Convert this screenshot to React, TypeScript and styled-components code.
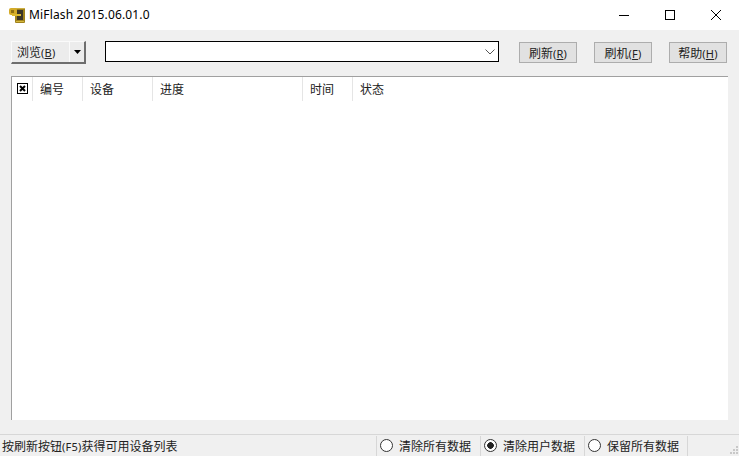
import React from "react";
import styled, { createGlobalStyle } from "styled-components";

const GlobalStyle = createGlobalStyle`
  html, body {
    margin: 0;
    padding: 0;
    background: #f0f0f0;
  }
  body {
    font-family: "Noto Sans", "Noto Sans CJK SC", sans-serif;
    font-size: 12px;
    color: #000;
  }
`;

const columns = [
  { label: "编号", width: 50 },
  { label: "设备", width: 70 },
  { label: "进度", width: 150 },
  { label: "时间", width: 50 },
  { label: "状态", width: 60 },
];

const modes = [
  { label: "清除所有数据", checked: false },
  { label: "清除用户数据", checked: true },
  { label: "保留所有数据", checked: false },
];

function AppIcon() {
  return (
    <svg width="16" height="16" viewBox="0 0 16 16">
      {/* phone body */}
      <rect x="6" y="1" width="10" height="15" rx="1" fill="#a0821c" />
      <rect x="6" y="1" width="10" height="1" fill="#cdb044" />
      <rect x="8" y="3" width="6" height="10" fill="#3a3528" />
      <rect x="7" y="14" width="8" height="1" fill="#d6b93f" />
      {/* key */}
      <rect x="0" y="1" width="8" height="7" rx="2" fill="#d4ab28" />
      <rect x="2" y="3" width="3" height="3" fill="#8f7012" />
      <rect x="3" y="7" width="9" height="2" fill="#dcb92f" />
    </svg>
  );
}

export default function App() {
  return (
    <Window>
      <GlobalStyle />
      <TitleBar>
        <TitleIcon>
          <AppIcon />
        </TitleIcon>
        <Title>MiFlash 2015.06.01.0</Title>
        <WindowButton>
          <svg width="10" height="10" viewBox="0 0 10 10">
            <path d="M0 5.5H10" stroke="#000" fill="none" />
          </svg>
        </WindowButton>
        <WindowButton>
          <svg width="10" height="10" viewBox="0 0 10 10">
            <rect x="0.5" y="0.5" width="9" height="9" stroke="#000" fill="none" />
          </svg>
        </WindowButton>
        <WindowButton>
          <svg width="10" height="10" viewBox="0 0 10 10">
            <path d="M0 0L10 10M10 0L0 10" stroke="#000" fill="none" />
          </svg>
        </WindowButton>
      </TitleBar>

      <Toolbar>
        <BrowseGroup>
          <BrowseButton>
            浏览<Hotkey>(<u>B</u>)</Hotkey>
          </BrowseButton>
          <BrowseArrow>
            <svg width="7" height="4" viewBox="0 0 7 4">
              <path d="M0 0H7L3.5 4Z" fill="#000" />
            </svg>
          </BrowseArrow>
        </BrowseGroup>
        <Combo>
          <svg width="10" height="6" viewBox="0 0 10 6">
            <path d="M0.5 0.5L5 5L9.5 0.5" stroke="#555" fill="none" />
          </svg>
        </Combo>
        <ActionButton>
          刷新<Hotkey>(<u>R</u>)</Hotkey>
        </ActionButton>
        <ActionButton>
          刷机<Hotkey>(<u>F</u>)</Hotkey>
        </ActionButton>
        <ActionButton>
          帮助<Hotkey>(<u>H</u>)</Hotkey>
        </ActionButton>
      </Toolbar>

      <DeviceList>
        <HeaderRow>
          <CheckCell>
            <CheckMark>
              <svg width="11" height="11" viewBox="0 0 11 11">
                <rect x="0.5" y="0.5" width="10" height="10" fill="#fff" stroke="#000" />
                <path d="M3 3L8 8M8 3L3 8" stroke="#000" strokeWidth="2" />
              </svg>
            </CheckMark>
          </CheckCell>
          {columns.map(col => (
            <HeaderCell key={col.label} $width={col.width}>
              {col.label}
            </HeaderCell>
          ))}
        </HeaderRow>
      </DeviceList>

      <StatusBar>
        <StatusText>
          按刷新按钮<Hotkey>(F5)</Hotkey>获得可用设备列表
        </StatusText>
        {modes.map(mode => (
          <ModeItem key={mode.label}>
            <Radio $checked={mode.checked} />
            {mode.label}
          </ModeItem>
        ))}
        <Grip>
          <svg width="12" height="12" viewBox="0 0 12 12">
            <path d="M9 2h2v2H9zM6 5h2v2H6zM9 5h2v2H9zM3 8h2v2H3zM6 8h2v2H6zM9 8h2v2H9z" fill="#c8c8c8" />
          </svg>
        </Grip>
      </StatusBar>
    </Window>
  );
}

const Window = styled.div`
  width: 739px;
  height: 456px;
  display: flex;
  flex-direction: column;
  overflow: hidden;
  background: #f0f0f0;
`;

const TitleBar = styled.div`
  height: 30px;
  display: flex;
  align-items: center;
  background: #fff;
  flex: none;
`;

const TitleIcon = styled.div`
  width: 16px;
  height: 16px;
  margin-left: 9px;
  margin-right: 4px;
`;

const Title = styled.div`
  flex: 1;
  font-size: 12px;
  letter-spacing: 0.15px;
  line-height: 30px;
  color: #000;
`;

const WindowButton = styled.div`
  width: 46px;
  height: 30px;
  display: flex;
  align-items: center;
  justify-content: center;
`;

const Toolbar = styled.div`
  height: 46px;
  flex: none;
  display: flex;
  align-items: flex-start;
  padding: 11px 12px 0 11px;
  box-sizing: border-box;
`;

const BrowseGroup = styled.div`
  width: 75px;
  height: 23px;
  display: flex;
  box-sizing: border-box;
  background: #ececec;
  border-top: 1px solid #fafafa;
  border-left: 1px solid #fafafa;
  border-right: 2px solid #6e6e6e;
  border-bottom: 2px solid #6e6e6e;
`;

const BrowseButton = styled.div`
  width: 58px;
  font-size: 12px;
  line-height: 21px;
  padding-left: 5px;
  box-sizing: border-box;
  color: #222;
  border-right: 1px solid #fafafa;
`;

const BrowseArrow = styled.div`
  flex: 1;
  display: flex;
  align-items: center;
  justify-content: center;
`;

const Combo = styled.div`
  width: 394px;
  height: 21px;
  margin-left: 19px;
  margin-right: 20px;
  box-sizing: border-box;
  border: 1px solid #000;
  background: #fff;
  display: flex;
  align-items: center;
  justify-content: flex-end;
  padding-right: 3px;
`;

const ActionButton = styled.div`
  width: 58px;
  height: 21px;
  margin-top: 1px;
  margin-right: 17px;
  box-sizing: border-box;
  background: #e1e1e1;
  border: 1px solid #adadad;
  font-size: 12px;
  line-height: 21px;
  text-align: center;
  color: #222;
  &:last-child {
    margin-right: 0;
  }
`;

const Hotkey = styled.span`
  font-size: 11px;
  letter-spacing: 0.2px;
`;

const DeviceList = styled.div`
  width: 717px;
  height: 344px;
  margin-left: 11px;
  flex: none;
  box-sizing: border-box;
  background: #fff;
  border-top: 1px solid #a0a0a0;
  border-left: 1px solid #a0a0a0;
`;

const HeaderRow = styled.div`
  display: flex;
  height: 24px;
`;

const CheckCell = styled.div`
  width: 21px;
  height: 24px;
  display: flex;
  align-items: center;
  justify-content: center;
  box-sizing: border-box;
  border-right: 1px solid #e5e5e5;
`;

const CheckMark = styled.div`
  width: 11px;
  height: 11px;
  margin-top: -5px;
`;

const HeaderCell = styled.div<{ $width: number }>`
  width: ${p => p.$width}px;
  height: 24px;
  box-sizing: border-box;
  padding-left: 7px;
  font-size: 12px;
  line-height: 26px;
  color: #222;
  border-right: 1px solid #e5e5e5;
  &:last-child {
    border-right: none;
  }
`;

const StatusBar = styled.div`
  margin-top: 14px;
  height: 22px;
  flex: none;
  box-sizing: border-box;
  display: flex;
  align-items: center;
  border-top: 1px solid #d7d7d7;
`;

const StatusText = styled.div`
  width: 376px;
  padding-left: 2px;
  box-sizing: border-box;
  font-size: 12px;
  color: #222;
  white-space: nowrap;
`;

const ModeItem = styled.div`
  width: 104px;
  height: 20px;
  box-sizing: border-box;
  display: flex;
  align-items: center;
  padding-left: 3px;
  gap: 6px;
  font-size: 12px;
  color: #222;
  border-left: 1px solid #d7d7d7;
  &:nth-of-type(4) {
    border-right: 1px solid #d7d7d7;
  }
`;

const Radio = styled.span<{ $checked: boolean }>`
  width: 13px;
  height: 13px;
  box-sizing: border-box;
  border: 1px solid #333;
  border-radius: 50%;
  background: ${p =>
    p.$checked
      ? "radial-gradient(circle, #222 0, #222 3px, #fff 3.6px)"
      : "#fff"};
  flex: none;
`;

const Grip = styled.div`
  flex: 1;
  display: flex;
  justify-content: flex-end;
  align-self: flex-end;
  height: 12px;
`;
